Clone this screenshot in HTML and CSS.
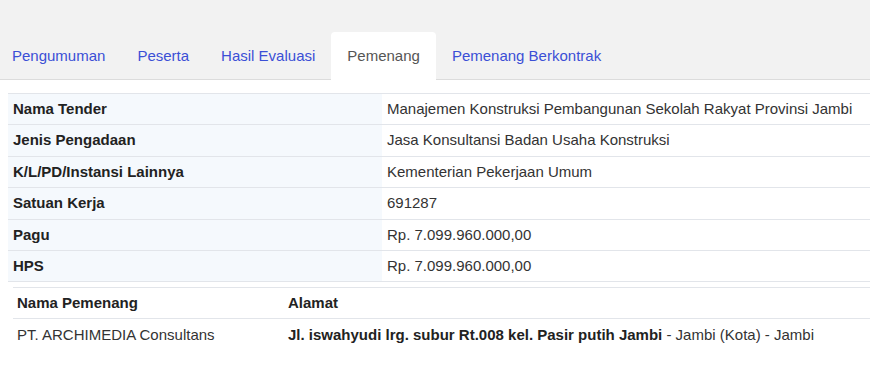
FILE: index.html
```html
<!DOCTYPE html>
<html lang="en">
<head>
    <meta charset="UTF-8">
    <meta name="viewport" content="width=device-width, initial-scale=1.0">
    <title>Pemenang</title>
    <link rel="stylesheet" href="styles.css">
</head>
<body>
    <ul class="tabs">
        <li><a href="#">Pengumuman</a></li>
        <li><a href="#">Peserta</a></li>
        <li><a href="#">Hasil Evaluasi</a></li>
        <li class="active"><a href="#">Pemenang</a></li>
        <li><a href="#">Pemenang Berkontrak</a></li>
    </ul>
    <div class="content">
        <table class="info">
            <tr><th>Nama Tender</th><td>Manajemen Konstruksi Pembangunan Sekolah Rakyat Provinsi Jambi</td></tr>
            <tr><th>Jenis Pengadaan</th><td>Jasa Konsultansi Badan Usaha Konstruksi</td></tr>
            <tr><th>K/L/PD/Instansi Lainnya</th><td>Kementerian Pekerjaan Umum</td></tr>
            <tr><th>Satuan Kerja</th><td>691287</td></tr>
            <tr><th>Pagu</th><td>Rp. 7.099.960.000,00</td></tr>
            <tr><th>HPS</th><td>Rp. 7.099.960.000,00</td></tr>
        </table>
        <table class="winners">
            <tr><th class="col-name">Nama Pemenang</th><th>Alamat</th></tr>
            <tr>
                <td>PT. ARCHIMEDIA Consultans</td>
                <td><b>Jl. iswahyudi lrg. subur Rt.008 kel. Pasir putih Jambi</b> - Jambi (Kota) - Jambi</td>
            </tr>
        </table>
    </div>
</body>
</html>
```
FILE: styles.css
```css
body {
    margin: 0;
    font-family: 'Liberation Sans', Arial, sans-serif;
    font-size: 15px;
    color: #333;
    background: #fff;
}

.tabs {
    display: flex;
    list-style: none;
    margin: 0;
    padding: 32px 0 0 0;
    background-color: #f2f2f2;
    border-bottom: 1px solid #dcdcdc;
}

.tabs li {
    height: 48px;
    margin-bottom: -1px;
    border-radius: 4px 4px 0 0;
}

.tabs li:first-child a {
    padding-left: 12px;
}

.tabs a {
    display: block;
    padding: 0 16px;
    line-height: 48px;
    color: #3b4fd6;
    text-decoration: none;
}

.tabs .active {
    background-color: #fff;
}

.tabs .active a {
    color: #555;
}

.content {
    padding: 13px 0 0 8px;
}

table {
    width: 100%;
    border-collapse: collapse;
}

.info th,
.info td {
    padding: 6px 5px;
    line-height: 18.4px;
    border-top: 1px solid #e2e5ea;
    text-align: left;
    vertical-align: middle;
}

.info tr:last-child th,
.info tr:last-child td {
    border-bottom: 1px solid #e2e5ea;
}

.info th {
    width: 364px;
    background-color: #f5f9fd;
    color: #222;
    font-weight: bold;
}

.winners {
    margin: 5px 0 0 5px;
    width: calc(100% - 5px);
}

.winners th,
.winners td {
    padding: 6px 4px;
    line-height: 18px;
    text-align: left;
}

.winners th {
    border-top: 1px solid #e2e5ea;
    border-bottom: 1px solid #e2e5ea;
    color: #222;
}

.winners td {
    padding-top: 7px;
}

.winners .col-name {
    width: 263px;
}

.winners b {
    color: #222;
}
```
